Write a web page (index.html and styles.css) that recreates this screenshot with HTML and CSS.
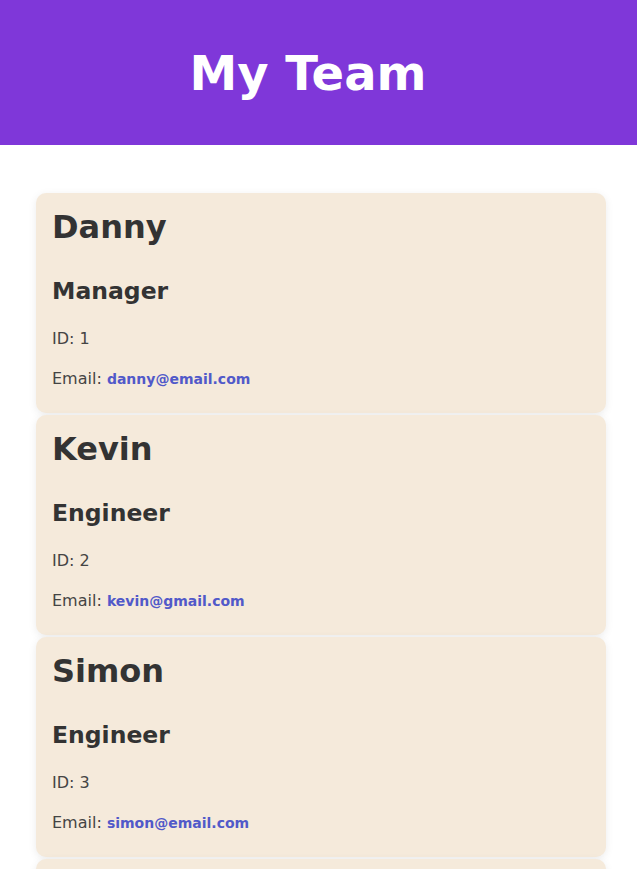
FILE: index.html
```html
<!DOCTYPE html>
<html lang="en">
<head>
<meta charset="utf-8">
<title>My Team</title>
<link rel="stylesheet" href="styles.css">
</head>
<body>
<header class="banner">
  <h1 class="banner-title">My Team</h1>
</header>
<main class="team">
  <section class="card">
    <h2 class="card-name">Danny</h2>
    <h3 class="card-role">Manager</h3>
    <p class="card-line">ID: 1</p>
    <p class="card-line card-email">Email: <a class="card-link" href="#">danny@email.com</a></p>
  </section>
  <section class="card">
    <h2 class="card-name">Kevin</h2>
    <h3 class="card-role">Engineer</h3>
    <p class="card-line">ID: 2</p>
    <p class="card-line card-email">Email: <a class="card-link" href="#">kevin@gmail.com</a></p>
  </section>
  <section class="card">
    <h2 class="card-name">Simon</h2>
    <h3 class="card-role">Engineer</h3>
    <p class="card-line">ID: 3</p>
    <p class="card-line card-email">Email: <a class="card-link" href="#">simon@email.com</a></p>
  </section>
  <section class="card">
    <h2 class="card-name">Alex</h2>
    <h3 class="card-role">Intern</h3>
    <p class="card-line">ID: 4</p>
    <p class="card-line card-email">Email: <a class="card-link" href="#">alex@email.com</a></p>
  </section>
</main>
</body>
</html>
```

FILE: styles.css
```css
html, body {
  margin: 0;
  padding: 0;
  background: #ffffff;
  font-family: "DejaVu Sans", Verdana, sans-serif;
  color: #333333;
}

.banner {
  background: #7f37d9;
  height: 145px;
  display: flex;
  align-items: center;
  justify-content: center;
  padding-right: 21px;
}

.banner-title {
  margin: 0;
  color: #ffffff;
  font-size: 48px;
  font-weight: bold;
  line-height: 1;
}

.team {
  display: flex;
  flex-direction: column;
  gap: 2px;
  margin: 48px 31px 0 36px;
}

.card {
  background: #f5eadb;
  border-radius: 10px;
  box-shadow: 0 2px 8px rgba(0, 0, 0, 0.08);
  padding: 16px 16px 24px;
}

.card-name {
  margin: 0;
  font-size: 32px;
  font-weight: bold;
  color: #333333;
  line-height: 37px;
}

.card-role {
  margin: 31px 0 0;
  font-size: 23.5px;
  font-weight: bold;
  color: #333333;
  line-height: 28px;
}

.card-line {
  margin: 24px 0 0;
  font-size: 16px;
  line-height: 19px;
  color: #444444;
}

.card-email {
  margin-top: 21px;
}

.card-link {
  color: #5159c9;
  font-weight: bold;
  font-size: 14px;
  text-decoration: none;
}
```
